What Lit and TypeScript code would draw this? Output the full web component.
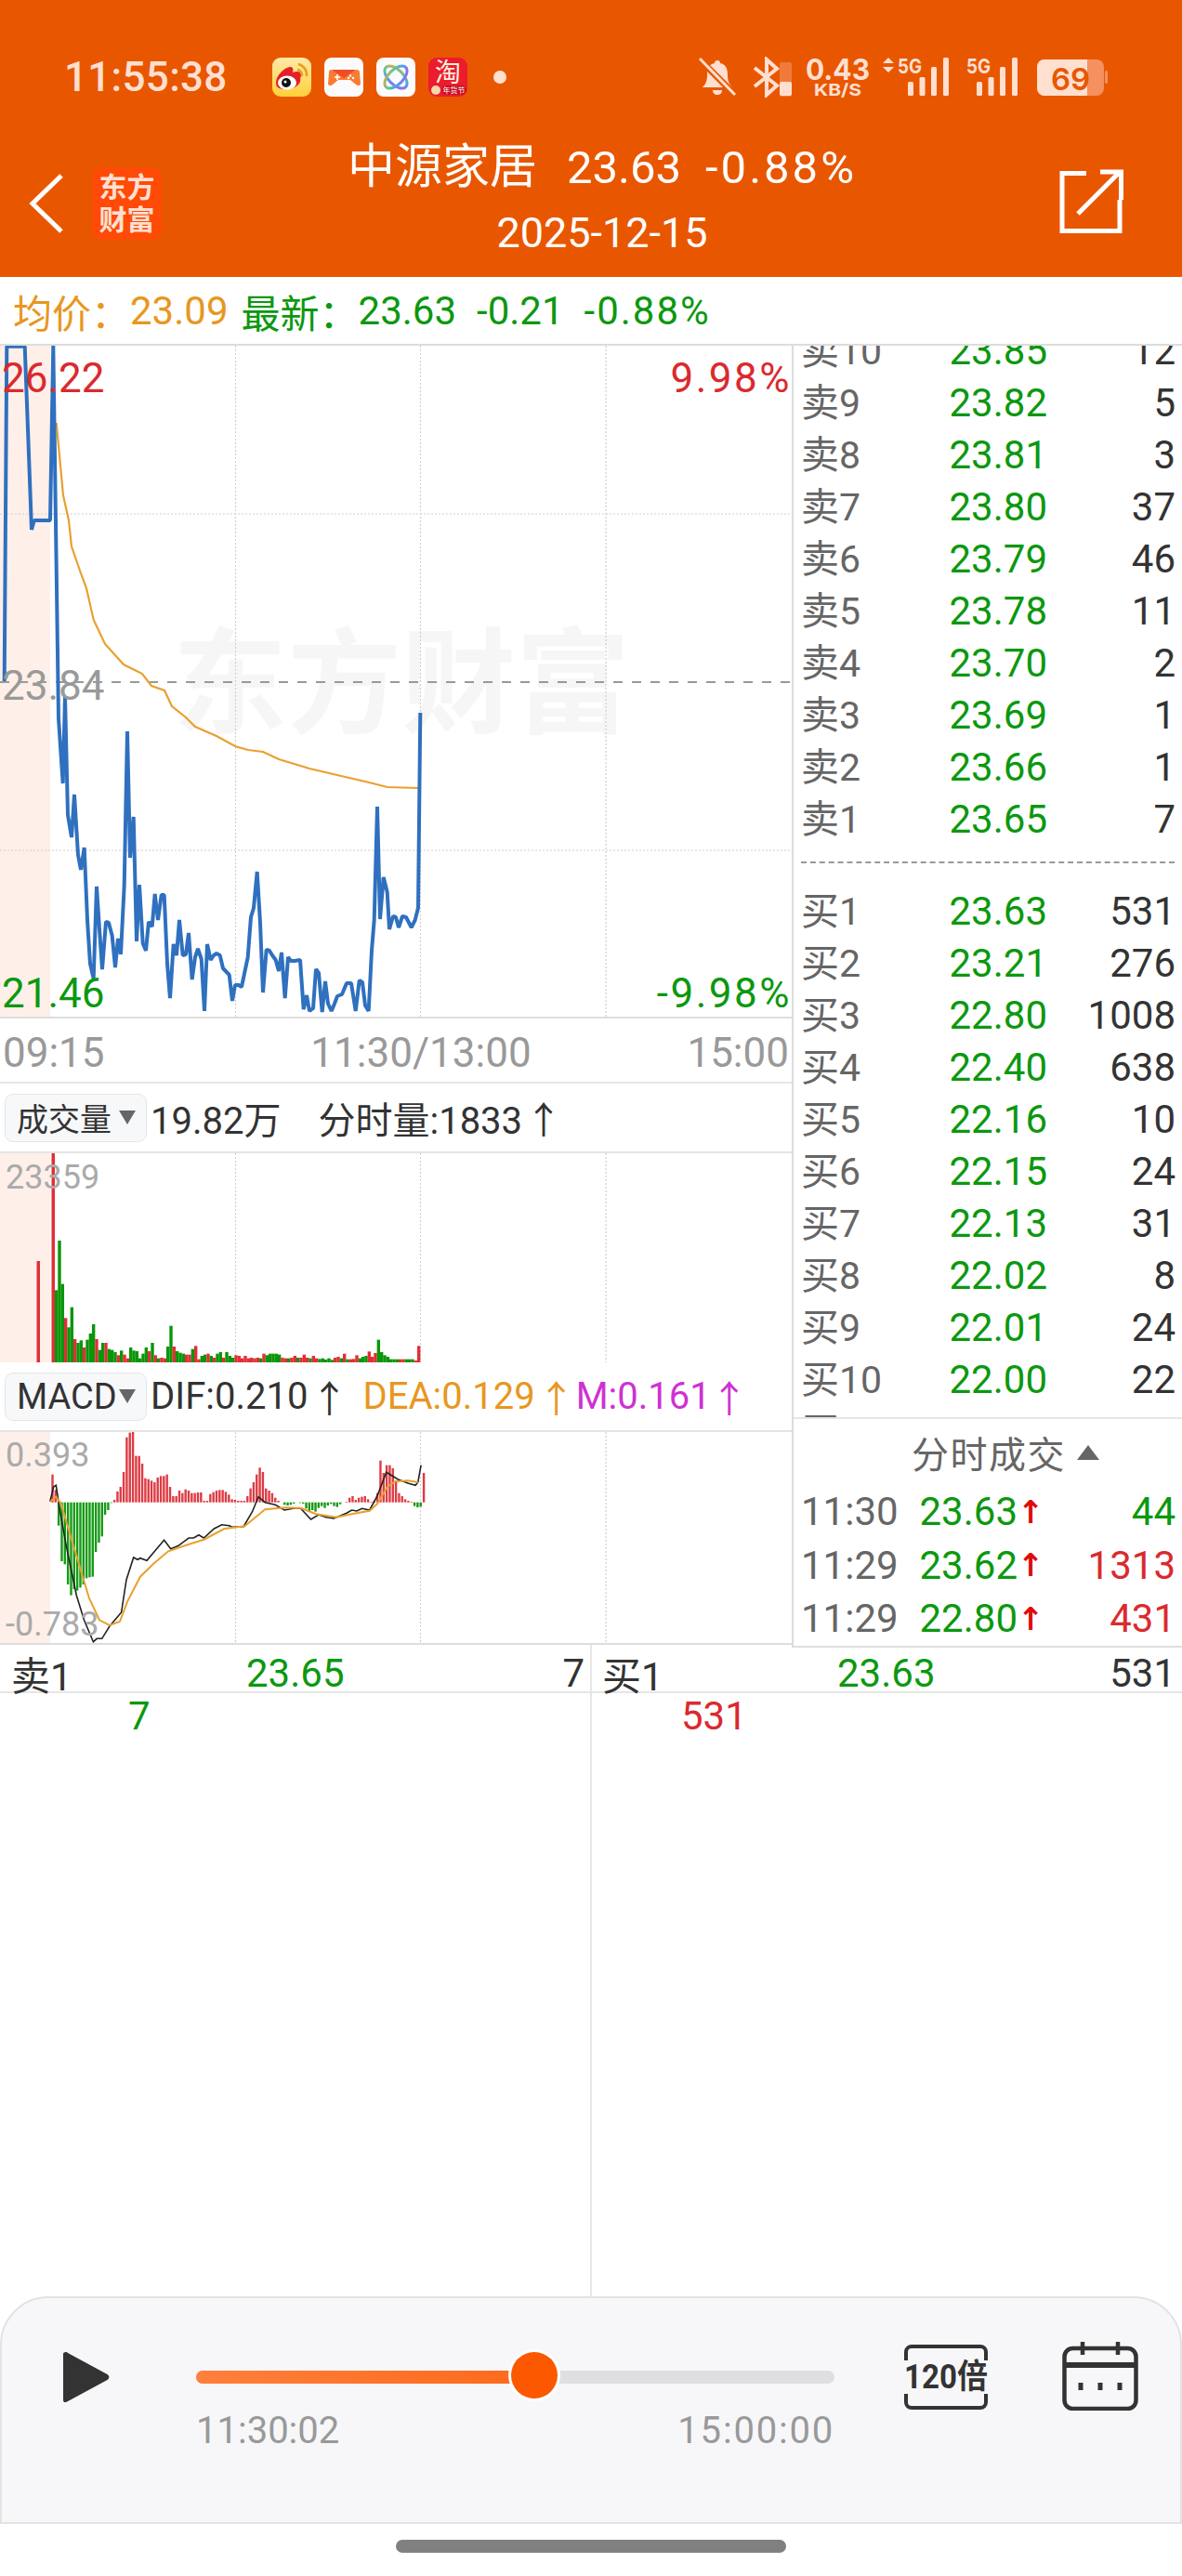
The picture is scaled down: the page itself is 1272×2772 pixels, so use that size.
import { LitElement, html, css, svg } from "lit";
import { customElement } from "lit/decorators.js";

const poly = (p: number[][]) => p.map((a) => a.join(",")).join(" ");

const PRICE = [[4.7,733],[7.3,372.7],[26.7,372.7],[34,570],[36.7,560],[54,560],[57.3,372],[63,773],[67.7,843],[70,750],[73,877],[77,901],[80,855],[84,920],[87,936],[90.7,912],[94,990],[97,1037],[100.7,1053],[104,954],[107,1000],[110,1043],[114,992],[117,993],[120.7,1007],[124,1041],[127,1010],[130,1027],[133.7,953],[137,787],[140,923],[143.7,879],[147,1013],[150,952],[153.7,1015],[157,1023],[160,992],[163.7,997],[166.7,962],[170,990],[173.7,963],[176.7,963],[180,1037],[183,1074],[186.7,1016],[190,1028],[193,990],[196.7,1028],[200,1027],[203,1004],[206.7,1054],[210,1030],[213,1021],[216.7,1032],[220,1088],[223,1016],[226.7,1033],[230,1028],[233,1026],[236.7,1028],[240,1042],[246.7,1049],[250,1077],[253,1060],[256.7,1060],[260,1062],[266.7,1030],[270,987],[273,977],[276.7,938],[280,993],[283,1068],[286.7,1022],[290,1023],[293,1028],[296.7,1033],[300,1045],[303,1025],[306.7,1074],[310,1030],[313,1034],[317,1034],[323,1033],[326.7,1086],[330,1071],[333,1088],[337,1085],[340,1043],[343,1047],[346.7,1089],[350,1056],[353,1080],[356.7,1088],[360,1080],[363,1072],[368,1070],[373,1058],[378,1058],[382.7,1088],[386.7,1055],[390,1057],[393,1082],[396.7,1088],[400,1023],[402.7,990],[406,868],[409,989],[412.7,944],[416.7,960],[419,1000],[423,986],[426,987],[429,998],[433,986],[437,987],[442.7,998],[446.7,990],[450,977],[452.3,767]];
const AVG = [[60.7,455],[68,533],[74,560],[77,588],[87,617],[93,633],[100.7,667],[113,693],[133,715],[153,725],[163,738],[177,743],[185,760],[200,772],[210,782],[233,792],[253,803],[267,807],[283,809],[300,817],[333,827],[367,835],[393,841],[417,847],[450,848]];

const VOL = "g685 g525 g665 r775 g805 g740 r843 g855 g847 r870 g845 g825 g795 r843 g878 g855 r855 g875 g878 g885 r895 g880 r893 r905 g870 g880 g882 g905 g890 g870 r882 g855 r895 g905 r903 r905 g867 g800 r867 g882 g887 g890 r893 r893 g875 r865 r908 g897 g893 r890 g897 r903 g890 g885 r903 g885 g897 g903 r895 r897 r905 r897 r905 r903 r905 r903 g905 r890 g895 g890 g890 g890 g893 r903 r905 g905 r903 r897 g903 r903 r893 r903 g905 r897 r905 g907 g905 g909 g905 g910 r903 r900 g905 r890 g908 r908 r907 r895 g905 g900 g897 r883 r900 r888 g845 g885 g895 g900 g908 g908 g908 r908 r908 g908 g908 g908 r912 r865".split(" ");

const MACD_BARS = [380,430,545,660,670,735,770,750,755,745,735,715,712,710,630,600,580,510,495,472,462,435,420,372,260,245,242,320,320,345,392,395,400,405,390,385,385,380,420,450,450,432,440,428,432,440,440,438,438,465,465,443,437,432,430,430,436,445,460,462,465,465,465,450,425,405,380,358,372,425,432,440,455,465,470,478,480,478,474,470,472,474,490,500,495,500,488,482,488,480,475,482,485,476,470,468,455,450,462,455,452,450,460,468,465,440,335,375,350,350,360,400,440,450,460,465,468,482,486,484,375];
const DIF = [[98,468],[105,420],[110,415],[118,500],[130,610],[150,770],[165,850],[183,920],[190,910],[200,910],[215,870],[238,825],[248,720],[262,648],[270,655],[275,650],[288,658],[305,625],[322,592],[335,620],[350,610],[370,585],[380,585],[390,575],[400,585],[420,555],[435,542],[450,545],[455,550],[478,548],[495,500],[507,452],[520,470],[540,478],[558,495],[580,488],[590,490],[610,525],[625,510],[640,518],[655,522],[680,505],[690,495],[700,498],[710,490],[725,495],[740,450],[758,373],[780,395],[800,408],[815,415],[820,405],[826,350]];
const DEA = [[98,468],[110,452],[120,475],[135,560],[155,670],[175,780],[195,850],[215,867],[235,855],[250,790],[275,710],[300,670],[330,628],[365,608],[400,590],[440,555],[480,547],[500,520],[520,493],[560,487],[590,488],[620,508],[660,518],[690,508],[725,497],[740,475],[760,420],[775,403],[800,400],[820,405]];
const mx = (p: number[][]) => p.map(([x, y]) => [+(x / 1.823).toFixed(1), +(1460 + y / 3).toFixed(1)]);

const ASKS = [["卖10","23.85","12"],["卖9","23.82","5"],["卖8","23.81","3"],["卖7","23.80","37"],["卖6","23.79","46"],["卖5","23.78","11"],["卖4","23.70","2"],["卖3","23.69","1"],["卖2","23.66","1"],["卖1","23.65","7"]];
const BIDS = [["买1","23.63","531"],["买2","23.21","276"],["买3","22.80","1008"],["买4","22.40","638"],["买5","22.16","10"],["买6","22.15","24"],["买7","22.13","31"],["买8","22.02","8"],["买9","22.01","24"],["买10","22.00","22"],["买11","21.99","7"]];
const TICKS = [["11:30","23.63","44","g"],["11:29","23.62","1313","r"],["11:29","22.80","431","r"]];

const verticals = (y1: number, y2: number) => [253.5, 452.5, 652].map((x) => svg`<line class="dot" x1=${x} x2=${x} y1=${y1} y2=${y2}></line>`);

@customElement("app-root")
export class AppRoot extends LitElement {
  static styles = css`
    :host { display: block; width: 1272px; height: 2772px; background: #fff; overflow: hidden;
      font-family: Roboto, "Noto Sans CJK SC", sans-serif; color: #333; }
    .page { display: flex; flex-direction: column; height: 2772px; }
    .header { height: 298px; background: #e85700; color: #fff; flex: none; overflow: hidden; }
    .status { display: flex; align-items: center; height: 94px; margin-top: 36px; padding: 0 0 0 69px; box-sizing: border-box; color: #ffdfd0; }
    .clock { font-size: 44px; font-weight: 500; width: 224px; letter-spacing: .3px; }
    .apps { display: flex; gap: 14px; align-items: center; }
    .apps svg { width: 42px; height: 42px; display: block; }
    .sdot { width: 14px; height: 14px; border-radius: 50%; background: #ffdfd0; margin-left: 14px; }
    .sright { margin-left: auto; margin-right: 78px; display: block; }
    .sright text { font-family: Inter, Roboto, sans-serif; font-weight: 700; fill: #ffdfd0; }
    .sright .batt { fill: #e85700; font-weight: 600; }
    .nav { height: 168px; display: flex; align-items: center; padding-top: 10px; box-sizing: border-box; }
    .navl { width: 174px; flex: none; display: flex; align-items: center; padding-left: 31px; box-sizing: border-box; gap: 30px; }
    .logo { width: 75px; height: 78px; border-radius: 12px; background: #ff4a08; color: #ffe0d2; font-size: 30px; font-weight: 700; line-height: 35px; text-align: center; padding-top: 4px; box-sizing: border-box; flex: none; }
    .navc { flex: 1; align-self: flex-start; margin-top: 5px; padding-right: 18px; text-align: center; }
    .title { font-size: 49px; line-height: 70px; white-space: pre; }
    .title b { font-weight: 400; font-size: 51px; margin-right: 32px; }
    .title i { font-style: normal; margin-left: 26px; letter-spacing: 3px; }
    .date { font-size: 45px; line-height: 70px; }
    .share { width: 132px; flex: none; }
    .info { height: 72px; flex: none; display: flex; align-items: center; padding-left: 14px; box-sizing: border-box; font-size: 42px; white-space: pre; }
    .pc { letter-spacing: 2px; }
    .org { color: #e8971f; } .grn { color: #0c980f; } .red { color: #da2a2e; } .mag { color: #cf31d3; } .gry { color: #999; }
    .main { flex: none; display: grid; grid-template-columns: 854px 418px; height: 1398px; border-top: 2px solid #ddd; box-sizing: content-box; }
    .left { display: flex; flex-direction: column; border-right: 2px solid #dcdcdc; }
    .chart { position: relative; flex: none; overflow: hidden; box-sizing: border-box; }
    .c1 { height: 724px; border-bottom: 2px solid #ddd; }
    .c2 { height: 227px; border-top: 2px solid #e4e4e4; }
    .c3 { height: 231px; border-top: 2px solid #e4e4e4; border-bottom: 2px solid #ddd; }
    .band { position: absolute; left: 0; top: 0; bottom: 0; width: 54px; background: #feefe9; }
    .wm { position: absolute; left: 186px; top: 300px; font-size: 123px; line-height: 130px; font-weight: 700; color: #f6f6f6; white-space: pre; }
    .chart svg { position: absolute; left: 0; top: 0; }
    .dot { stroke: #cfcfcf; stroke-width: 1.2; stroke-dasharray: 2 2; fill: none; }
    .mid { stroke: #999; stroke-width: 2; stroke-dasharray: 10 10; }
    .lb { position: absolute; font-size: 44px; line-height: 50px; white-space: pre; }
    .lbp { letter-spacing: 2.500px; right: 0; }
    .lbs { position: absolute; font-size: 36px; line-height: 40px; color: #aaa; left: 6px; }
    .axis { height: 70px; flex: none; display: flex; justify-content: space-between; align-items: center; padding: 5px 3px 0; font-size: 44px; color: #999; box-sizing: border-box; border-bottom: 2px solid #e6e6e6; }
    .axis span:nth-child(2) { margin-left: 54px; }
    .hd { height: 73px; flex: none; display: flex; align-items: center; font-size: 40px; white-space: pre; padding-left: 5px; box-sizing: border-box; }
    .ar { margin-left: 3px; }
    .sel { width: 153px; height: 52px; box-sizing: border-box; background: #f7f8fa; border: 1.5px solid #e6e6e6; border-radius: 9px; display: flex; align-items: center; padding-left: 12px; margin-right: 4px; font-size: 34px; color: #333; flex: none; }
    .sel.en { font-size: 38px; }
    .sel i { width: 0; height: 0; border-left: 9px solid transparent; border-right: 9px solid transparent; border-top: 15px solid #666; margin-left: auto; margin-right: 11px; }
    .right { display: flex; flex-direction: column; min-width: 0; }
    .book { height: 1153px; overflow: hidden; flex: none; }
    .bookin { margin-top: -22px; }
    .row { height: 56px; display: grid; grid-template-columns: 100px 165px 138px; align-items: center; padding-left: 8px; font-size: 42px; line-height: 56px; white-space: pre; }
    .row b { font-weight: 400; color: #666; font-size: 41px; }
    .row span { text-align: right; }
    .row .p { color: #0c980f; }
    .row .q { color: #333; }
    .sep { height: 43px; padding: 17px 8px 0 8px; box-sizing: border-box; }
    .sep div { border-top: 2px dashed #999; }
    .ticks { flex: 1; border-top: 2px solid #e6e6e6; border-bottom: 2px solid #ddd; box-sizing: border-box; }
    .th { height: 72px; margin-bottom: -1px; display: flex; align-items: center; padding-left: 127px; font-size: 40px; color: #666; letter-spacing: 1.5px; }
    .th i { width: 0; height: 0; border-left: 12px solid transparent; border-right: 12px solid transparent; border-bottom: 16px solid #666; margin-left: 12px; }
    .tr { height: 57.5px; display: grid; grid-template-columns: 100px 133px 28px 142px; align-items: center; padding-left: 8px; font-size: 42px; white-space: pre; }
    .tr .t { color: #666; }
    .tr .p { color: #0c980f; text-align: right; }
    .tr .a { color: #e00b0b; font-weight: 700; font-size: 34px; text-align: center; font-family: "DejaVu Sans", sans-serif; }
    .tr .v { text-align: right; }
    .depth { flex: 1; display: grid; grid-template-columns: 637px 1fr; min-height: 0; }
    .dc { font-size: 42px; }
    .dc:first-child { border-right: 2px solid #e6e6e6; }
    .drow { height: 50px; border-bottom: 2px solid #e6e6e6; display: grid; align-items: center; box-sizing: content-box; white-space: pre; }
    .dl { grid-template-columns: 12px 100px 257px 260px; }
    .dr { grid-template-columns: 11px 100px 257px 260px; }
    .drow .dp { text-align: left; padding-left: 153px; color: #0c980f; }
    .dq { color: #333; text-align: right; }
    .cum { line-height: 50px; }
    .cl { padding-left: 138px; }
    .cr { padding-left: 96px; }
    .ctl { height: 245px; flex: none; box-sizing: border-box; background: #f7f7f9; border: 2px solid #e3e3e3; border-radius: 52px 52px 0 0; display: flex; align-items: flex-start; padding: 47px 0 0 66px; }
    .play { margin-top: 10px; width: 50px; height: 56px; flex: none; display: block; }
    .sl { width: 687px; margin-left: 93px; flex: none; margin-top: 31px; }
    .track { position: relative; height: 14px; border-radius: 7px; background: #dfdfe1; }
    .fill { height: 14px; border-radius: 7px 0 0 7px; background: linear-gradient(90deg, #ff7f3c, #fc6a1c); }
    .knob { position: absolute; top: -20px; width: 50px; height: 50px; margin-left: -25px; border-radius: 50%; background: #fb5800; box-shadow: 0 0 0 3px #fff; }
    .times { display: flex; justify-content: space-between; margin-top: 26px; line-height: 50px; font-size: 40px; color: #999; }
    .times .w { letter-spacing: 1.800px; }
    .ic120 { margin: 3px 0 0 75px; flex: none; display: block; }
    .ic120 text { font-family: Roboto, "Noto Sans CJK SC", sans-serif; font-weight: 700; font-size: 36px; fill: #333; }
    .cal { margin: 0 0 0 80px; flex: none; display: block; }
    .home { height: 56px; flex: none; display: flex; justify-content: center; padding-top: 17px; box-sizing: border-box; }
    .home div { width: 420px; height: 14px; border-radius: 7px; background: #808080; }
  `;

  private bookRow(r: string[]) {
    return html`<div class="row"><b>${r[0]}</b><span class="p">${r[1]}</span><span class="q">${r[2]}</span></div>`;
  }

  private statusApps() {
    return html`<div class="apps">
      <svg viewBox="0 0 42 42">
        <defs><linearGradient id="wb" x1="0" y1="0" x2="0" y2="1"><stop offset="0" stop-color="#ffe9a8"></stop><stop offset="1" stop-color="#ffd03a"></stop></linearGradient></defs>
        <rect width="42" height="42" rx="9" fill="url(#wb)"></rect>
        <path d="M4 27c0-7 8-16 15-17 3 0 4 2 3 6 5-2 9-1 9 3 0 1 0 2-1 3 2 6-6 12-14 12S4 33 4 27z" fill="#e3202a"></path>
        <ellipse cx="16" cy="27" rx="10" ry="7.5" fill="#fff"></ellipse>
        <circle cx="15" cy="27" r="5" fill="#111"></circle><circle cx="14" cy="26" r="1.5" fill="#fff"></circle>
        <path d="M27 13a6 6 0 0 1 5 7M28 7a12 12 0 0 1 9 13" stroke="#ec9a1e" stroke-width="2.5" fill="none"></path>
      </svg>
      <svg viewBox="0 0 42 42">
        <rect width="42" height="42" rx="8" fill="#fbfbfb"></rect>
        <path d="M7 13l14 4 14-4c2 0 3 1 3 3l1 12c0 2-3 3-5 1l-6-5H15l-6 5c-2 2-5 1-5-1l1-12c0-2 1-3 2-3z" fill="#fb7b32"></path>
        <path d="M8 13h26L21 22z" fill="#ef4d2a"></path>
        <path d="M11 21h6M14 18v6" stroke="#fff" stroke-width="1.6"></path><circle cx="28" cy="19.500" r="1.200" fill="#fff"></circle><circle cx="31" cy="22" r="1.200" fill="#fff"></circle><circle cx="26" cy="22" r="1.200" fill="#fff"></circle>
      </svg>
      <svg viewBox="0 0 42 42">
        <defs><linearGradient id="rb" x1="0" y1="0" x2="1" y2="1"><stop offset="0" stop-color="#f6a33a"></stop><stop offset=".35" stop-color="#58c8a0"></stop><stop offset=".65" stop-color="#4c9df0"></stop><stop offset="1" stop-color="#c050e8"></stop></linearGradient></defs>
        <rect width="42" height="42" rx="8" fill="#fbfbfb"></rect>
        <ellipse cx="21" cy="21" rx="15" ry="8" transform="rotate(45 21 21)" fill="none" stroke="url(#rb)" stroke-width="3"></ellipse>
        <ellipse cx="21" cy="21" rx="15" ry="8" transform="rotate(-45 21 21)" fill="none" stroke="url(#rb)" stroke-width="3"></ellipse>
      </svg>
      <svg viewBox="0 0 42 42">
        <rect width="42" height="42" rx="9" fill="#ec1c2c"></rect>
        <text x="21" y="26" text-anchor="middle" font-size="28" font-weight="400" fill="#fff1e0">淘</text>
        <rect x="14" y="30" width="27" height="10" rx="5" fill="#c80d20"></rect>
        <text x="27.500" y="38" text-anchor="middle" font-size="8" fill="#fff">年货节</text>
        <circle cx="8" cy="35" r="5" fill="#f5d9a8"></circle>
      </svg>
      <div class="sdot"></div>
    </div>`;
  }

  private statusRight() {
    const bars = (x: number) => svg`
      <rect x=${x} y="27" width="6" height="15" rx="1.500"></rect>
      <rect x=${x + 12.5} y="22" width="6" height="20" rx="1.500"></rect>
      <rect x=${x + 25} y="11" width="6" height="31" rx="1.500"></rect>
      <rect x=${x + 38} y="1" width="6" height="41" rx="1.500"></rect>`;
    return html`<svg class="sright" width="442" height="44" viewBox="0 0 442 44" fill="#ffdfd0">
      <path d="M20 4c2 0 3 1 3 3 6 1 8 6 8 12 0 6 1 10 5 14H4c4-4 5-8 5-14 0-6 2-11 8-12 0-2 1-3 3-3z"></path>
      <path d="M15 36h10c0 3-2 5-5 5s-5-2-5-5z"></path>
      <path d="M0 2l40 40" stroke="#e85700" stroke-width="7"></path>
      <path d="M1 2l38 39" stroke="#ffdfd0" stroke-width="3"></path>
      <path d="M60 12l24 19-11 10V3l11 10-24 19" fill="none" stroke="#ffdfd0" stroke-width="4"></path>
      <rect x="87" y="6" width="13" height="37" rx="2" fill="#f17a3a"></rect>
      <rect x="87" y="27" width="13" height="15" rx="2"></rect>
      <text x="115" y="25" font-size="31" textLength="69" lengthAdjust="spacingAndGlyphs">0.43</text>
      <text x="124" y="42" font-size="18" textLength="51" lengthAdjust="spacingAndGlyphs">KB/S</text>
      <path d="M198 7l6-6 6 6zM198 11l6 6 6-6z"></path>
      <text x="214" y="18" font-size="22" textLength="26" lengthAdjust="spacingAndGlyphs">5G</text>
      <g transform="translate(225,0)">${bars(0)}</g>
      <text x="288" y="18" font-size="22" textLength="26" lengthAdjust="spacingAndGlyphs">5G</text>
      <g transform="translate(299,0)">${bars(0)}</g>
      <g transform="translate(364,0)">
        <rect x="0" y="3" width="72" height="39" rx="8" fill="#f4915e"></rect>
        <path d="M8 3h46v39H8a8 8 0 0 1-8-8V11a8 8 0 0 1 8-8z"></path>
        <rect x="73" y="15" width="3" height="14" rx="1.500" fill="#f4915e"></rect>
        <text class="batt" x="36" y="36" text-anchor="middle" font-size="33">69</text>
      </g>
    </svg>`;
  }

  render() {
    const pct = (364 / 687) * 100;
    return html`<div class="page">
      <div class="header">
        <div class="status">
          <div class="clock">11:55:38</div>
          ${this.statusApps()}
          ${this.statusRight()}
        </div>
        <div class="nav">
          <div class="navl">
            <svg width="38" height="64" viewBox="0 0 38 64" fill="none"><path d="M35 2L4 32l31 30" stroke="#fff" stroke-width="5"></path></svg>
            <div class="logo">东方<br />财富</div>
          </div>
          <div class="navc">
            <div class="title"><b>中源家居</b>23.63<i>-0.88%</i></div>
            <div class="date">2025-12-15</div>
          </div>
          <div class="share">
            <svg width="70" height="70" viewBox="0 0 70 70" fill="none" stroke="#fff" stroke-width="5"><path d="M29 4.500H3v62h62V33"></path><path d="M20 48L65 3M44 3h22.500v30"></path></svg>
          </div>
        </div>
      </div>

      <div class="info"><span class="org">均价：</span><span class="org">23.09</span><span class="grn" style="margin-left:14px">最新：</span><span class="grn">23.63</span><span class="grn" style="margin-left:22px">-0.21</span><span class="grn pc" style="margin-left:22px">-0.88%</span></div>

      <div class="main">
        <div class="left">
          <div class="chart c1">
            <div class="band"></div>
            <div class="wm">东方财富</div>
            <svg width="852" height="722" viewBox="0 372 852 722">
              ${verticals(372, 1096)}
              <line class="dot" x1="0" x2="852" y1="553" y2="553"></line>
              <line class="dot" x1="0" x2="852" y1="915" y2="915"></line>
              <line class="mid" x1="0" x2="852" y1="734" y2="734"></line>
              <polyline points=${poly(AVG)} fill="none" stroke="#e9a02e" stroke-width="2.200"></polyline>
              <polyline points=${poly(PRICE)} fill="none" stroke="#2f70bf" stroke-width="4" stroke-linejoin="bevel"></polyline>
            </svg>
            <div class="lb red" style="left:2px;top:10px">26.22</div>
            <div class="lb red lbp" style="top:10px">9.98%</div>
            <div class="lb gry" style="left:2px;top:341px">23.84</div>
            <div class="lb grn" style="left:2px;top:672px">21.46</div>
            <div class="lb grn lbp" style="top:672px">-9.98%</div>
          </div>
          <div class="axis"><span>09:15</span><span>11:30/13:00</span><span>15:00</span></div>
          <div class="hd"><div class="sel">成交量<i></i></div><span>19.82万</span><span style="margin-left:40px">分时量:1833</span><span class="ar">↑</span></div>
          <div class="chart c2">
            <div class="band"></div>
            <svg width="852" height="225" viewBox="0 1241 852 225">
              ${verticals(1241, 1466)}
              <rect x="39.500" y="1357" width="3.500" height="109" fill="#e03036"></rect>
              <rect x="55.500" y="1241" width="3.500" height="225" fill="#e03036"></rect>
              ${VOL.map((v, i) => {
                const z = +v.slice(1);
                return svg`<rect x=${(182 + i * 10) / 3 - 1.7} y=${1160 + z / 3} width="3.400" height=${(918 - z) / 3} fill=${v[0] === "r" ? "#e03036" : "#0a960a"}></rect>`;
              })}
            </svg>
            <div class="lbs" style="top:6px">23359</div>
          </div>
          <div class="hd"><div class="sel en">MACD<i></i></div><span>DIF:0.210</span><span class="ar">↑</span><span class="org" style="margin-left:16px">DEA:0.129</span><span class="org ar">↑</span><span class="mag" style="margin-left:1px">M:0.161</span><span class="mag">↑</span></div>
          <div class="chart c3">
            <div class="band"></div>
            <svg width="852" height="227" viewBox="0 1541 852 227">
              ${verticals(1541, 1768)}
              ${MACD_BARS.map((z, i) => {
                const x = (103 + i * 6.07) / 1.823;
                const y0 = 1460 + 470 / 3, y1 = 1460 + z / 3;
                return svg`<rect x=${x - 1.2} y=${Math.min(y0, y1)} width="2.400" height=${Math.abs(y1 - y0)} fill=${z < 470 ? "#dd3c44" : "#169a16"}></rect>`;
              })}
              <polyline points=${poly(mx(DIF))} fill="none" stroke="#222" stroke-width="1.600"></polyline>
              <polyline points=${poly(mx(DEA))} fill="none" stroke="#e9a02e" stroke-width="2"></polyline>
            </svg>
            <div class="lbs" style="top:5px">0.393</div>
            <div class="lbs" style="top:187px">-0.783</div>
          </div>
        </div>
        <div class="right">
          <div class="book"><div class="bookin">
            ${ASKS.map((r) => this.bookRow(r))}
            <div class="sep"><div></div></div>
            ${BIDS.map((r) => this.bookRow(r))}
          </div></div>
          <div class="ticks">
            <div class="th">分时成交<i></i></div>
            ${TICKS.map((t) => html`<div class="tr"><span class="t">${t[0]}</span><span class="p">${t[1]}</span><span class="a">↑</span><span class="v ${t[3] === "g" ? "grn" : "red"}">${t[2]}</span></div>`)}
          </div>
        </div>
      </div>

      <div class="depth">
        <div class="dc">
          <div class="drow dl"><span></span><span>卖1</span><span class="dp">23.65</span><span class="dq">7</span></div>
          <div class="cum cl grn">7</div>
        </div>
        <div class="dc">
          <div class="drow dr"><span></span><span>买1</span><span class="dp">23.63</span><span class="dq">531</span></div>
          <div class="cum cr red">531</div>
        </div>
      </div>

      <div class="ctl">
        <svg class="play" viewBox="2 0 40 56" preserveAspectRatio="none"><path d="M2 3c0-2 3-3 4-1l34 23c2 2 2 4 0 6L6 54c-2 2-4 1-4-1z" fill="#333"></path></svg>
        <div class="sl">
          <div class="track"><div class="fill" style="width:${pct}%"></div><div class="knob" style="left:${pct}%"></div></div>
          <div class="times"><span>11:30:02</span><span class="w">15:00:00</span></div>
        </div>
        <svg class="ic120" width="90" height="70" viewBox="0 0 90 70" fill="none">
          <path d="M2 17V8a6 6 0 0 1 6-6h74a6 6 0 0 1 6 6v9M2 53v9a6 6 0 0 0 6 6h74a6 6 0 0 0 6-6v-9" stroke="#333" stroke-width="4"></path>
          <text x="45" y="47" text-anchor="middle" textLength="90" lengthAdjust="spacingAndGlyphs">120倍</text>
        </svg>
        <svg class="cal" width="82" height="74" viewBox="0 0 82 74" fill="none" stroke="#333" stroke-width="4.500">
          <rect x="2.500" y="7" width="77" height="65" rx="9"></rect>
          <path d="M2.500 25h77" stroke-width="6"></path>
          <path d="M22 0v14M60 0v14"></path>
          <path d="M20 44v8M41 44v8M62 44v8" stroke-width="5"></path>
        </svg>
      </div>
      <div class="home"><div></div></div>
    </div>`;
  }
}
